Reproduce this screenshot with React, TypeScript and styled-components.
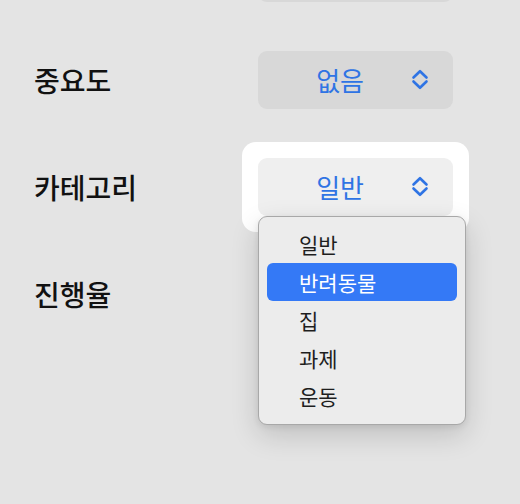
import React from "react";
import styled, { createGlobalStyle } from "styled-components";

const Global = createGlobalStyle`
  html, body {
    margin: 0;
    padding: 0;
    background: #e4e4e4;
    overflow: hidden;
  }
  body {
    font-family: "Noto Sans CJK KR", "Noto Sans", sans-serif;
  }
`;

const Page = styled.div`
  width: 520px;
  height: 504px;
  overflow: hidden;
  background: #e4e4e4;
`;

const List = styled.div`
  display: flex;
  flex-direction: column;
  margin-top: -81px;
`;

const Row = styled.div`
  height: 107px;
  display: flex;
  align-items: center;
  padding-left: 34px;
`;

const Label = styled.div`
  width: 224px;
  font-size: 28px;
  font-weight: 500;
  color: #111;
  line-height: 1;
`;

const ControlSlot = styled.div`
  position: relative;
  width: 195px;
  height: 58px;
`;

const FocusRing = styled.div`
  position: absolute;
  inset: -16px;
  background: #ffffff;
  border-radius: 14px;
`;

const Button = styled.div<{ $focused?: boolean }>`
  position: relative;
  width: 195px;
  height: 58px;
  box-sizing: border-box;
  border-radius: 9px;
  background: ${(p) => (p.$focused ? "#efefef" : "#d8d8d8")};
  display: flex;
  align-items: center;
  justify-content: flex-end;
  gap: 47px;
  padding-right: 24px;
`;

const Value = styled.span`
  font-size: 26px;
  color: #2f74e4;
  line-height: 1;
`;

const Menu = styled.div`
  position: absolute;
  left: 0;
  top: 58px;
  width: 208px;
  box-sizing: border-box;
  padding: 8px 8px 9px;
  background: #ececec;
  border: 1px solid #a8a8a8;
  border-radius: 9px;
  box-shadow: 0 10px 28px rgba(0, 0, 0, 0.16), 0 2px 6px rgba(0, 0, 0, 0.08);
  z-index: 10;
`;

const Item = styled.div<{ $active?: boolean }>`
  height: 38px;
  display: flex;
  align-items: center;
  padding-left: 32px;
  border-radius: 6px;
  font-size: 21px;
  color: ${(p) => (p.$active ? "#ffffff" : "#1e1e1e")};
  background: ${(p) => (p.$active ? "#3479f6" : "transparent")};
`;

const Chevrons = () => (
  <svg width="18" height="21" viewBox="0 0 18 21" fill="none">
    <path
      d="M2.5 8.5 L9 2.2 L15.5 8.5"
      stroke="#2f74e4"
      strokeWidth="2.6"
      strokeLinecap="round"
      strokeLinejoin="round"
    />
    <path
      d="M2.5 12.5 L9 18.8 L15.5 12.5"
      stroke="#2f74e4"
      strokeWidth="2.6"
      strokeLinecap="round"
      strokeLinejoin="round"
    />
  </svg>
);

const items = ["일반", "반려동물", "집", "과제", "운동"];

export default function App() {
  return (
    <Page>
      <Global />
      <List>
        <Row>
          <Label />
          <ControlSlot>
            <Button />
          </ControlSlot>
        </Row>
        <Row>
          <Label>중요도</Label>
          <ControlSlot>
            <Button>
              <Value>없음</Value>
              <Chevrons />
            </Button>
          </ControlSlot>
        </Row>
        <Row>
          <Label>카테고리</Label>
          <ControlSlot>
            <FocusRing />
            <Button $focused>
              <Value>일반</Value>
              <Chevrons />
            </Button>
            <Menu>
              {items.map((it) => (
                <Item key={it} $active={it === "반려동물"}>
                  {it}
                </Item>
              ))}
            </Menu>
          </ControlSlot>
        </Row>
        <Row>
          <Label>진행율</Label>
        </Row>
      </List>
    </Page>
  );
}
